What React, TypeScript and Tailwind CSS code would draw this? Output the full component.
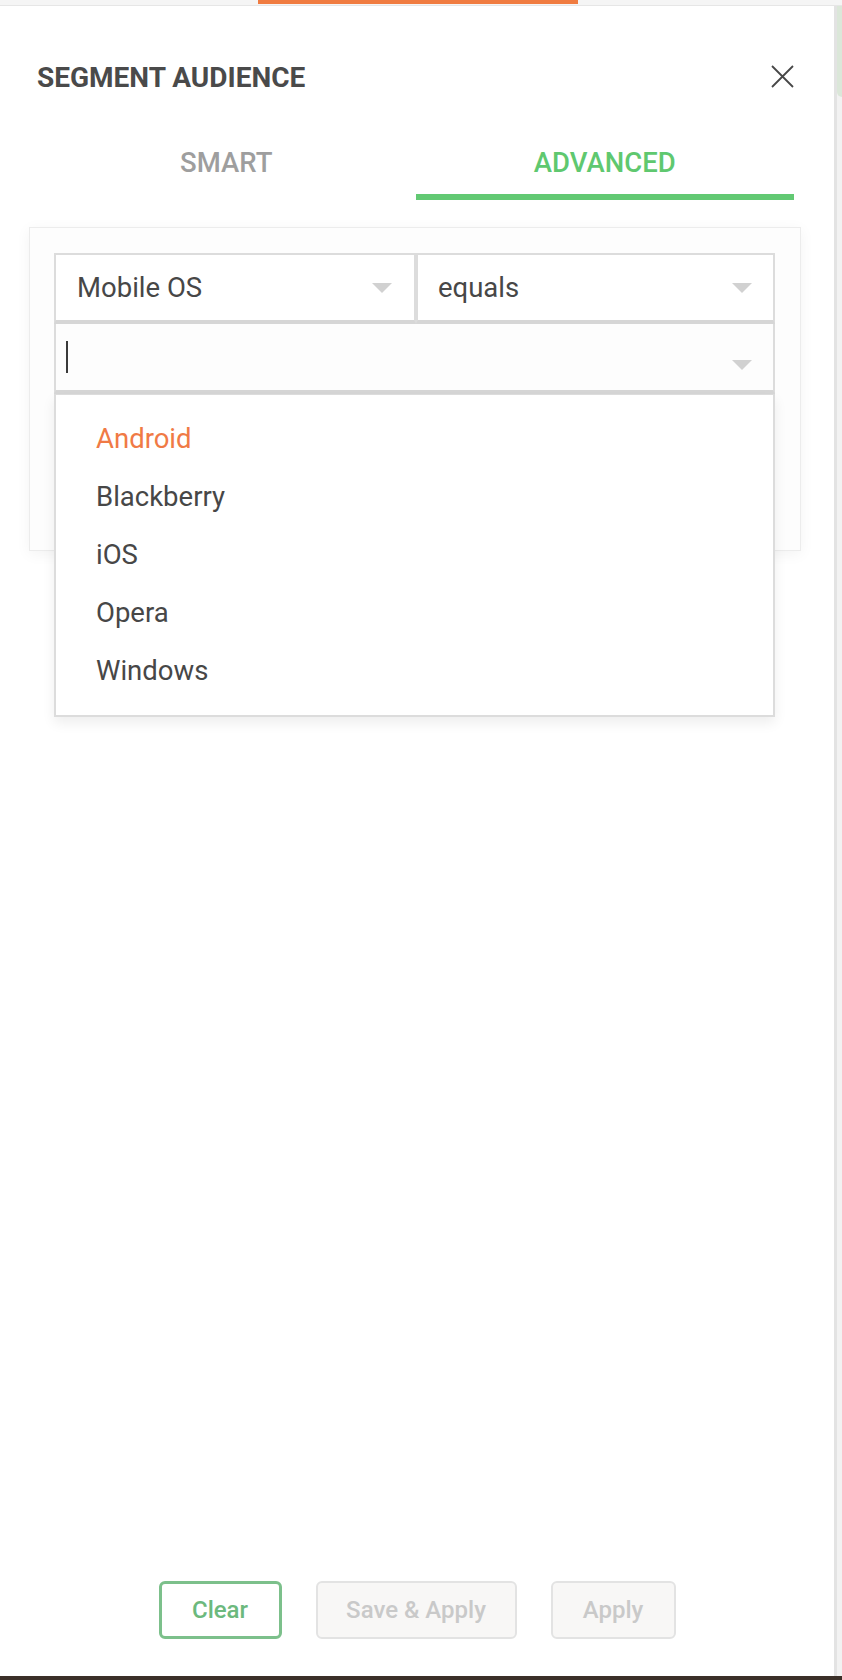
import React, { useState } from 'react';

const osOptions = ['Android', 'Blackberry', 'iOS', 'Opera', 'Windows'];

const Caret: React.FC<{ className?: string }> = ({ className }) => (
  <svg className={className} width="20" height="10" viewBox="0 0 20 10" fill="#d1d1d1">
    <path d="M0 0h20L10 10z" />
  </svg>
);

const App: React.FC = () => {
  const [tab, setTab] = useState<'smart' | 'advanced'>('advanced');
  const [active] = useState('Android');

  return (
    <div className="h-[1680px] w-[842px] flex flex-col bg-[#f4f4f4] font-['Roboto',sans-serif]">
      {/* barre du haut */}
      <div className="h-[6px] flex-none bg-[#f5f5f5] border-b border-[#e6e6e6]">
        <div className="ml-[258px] w-[320px] h-[4px] bg-[#f07c41]"></div>
      </div>

      <div className="flex flex-1 min-h-0">
        {/* panneau principal */}
        <div className="w-[834px] flex flex-col bg-white">
          {/* en-tête */}
          <div className="flex items-start justify-between pt-[58px] pl-[37px] pr-[40px]">
            <h2 className="text-[28px] leading-[28px] font-bold text-[#4a4a4a]">SEGMENT AUDIENCE</h2>
            <button className="w-[23px] h-[23px] mt-[1px]" aria-label="close">
              <svg width="23" height="23" viewBox="0 0 23 23" stroke="#474747" strokeWidth="1.8" fill="none">
                <path d="M1 1l21 21M22 1L1 22" />
              </svg>
            </button>
          </div>

          {/* onglets */}
          <div className="flex mt-[57px] pl-[37px] pr-[40px]">
            <button
              onClick={() => setTab('smart')}
              className={`flex-1 pb-[18px] border-b-[6px] text-[27.5px] leading-[27px] font-medium ${
                tab === 'smart' ? 'text-[#5fc86f] border-[#62c973]' : 'text-[#9e9e9e] border-transparent'
              }`}
            >
              SMART
            </button>
            <button
              onClick={() => setTab('advanced')}
              className={`flex-1 pb-[18px] border-b-[6px] text-[27.5px] leading-[27px] font-medium ${
                tab === 'advanced' ? 'text-[#5fc86f] border-[#62c973]' : 'text-[#9e9e9e] border-transparent'
              }`}
            >
              ADVANCED
            </button>
          </div>

          {/* carte des conditions */}
          <div className="mt-[27px] ml-[29px] w-[772px] h-[324px] border border-[#ececec] bg-[#fdfdfd] shadow-[0_3px_14px_rgba(0,0,0,0.05)] pt-[25px] pl-[24px] pr-[25px]">
            <div className="relative">
              <div className="flex">
                <div className="w-[362px] h-[71px] flex items-center justify-between pl-[21px] pr-[22px] bg-white border-2 border-b-4 border-[#dcdcdc] border-b-[#d6d6d6]">
                  <span className="text-[27.5px] leading-[27px] text-[#474747]">Mobile OS</span>
                  <Caret />
                </div>
                <div className="flex-1 h-[71px] flex items-center justify-between pl-[20px] pr-[21px] bg-white border-2 border-b-4 border-[#dcdcdc] border-b-[#d6d6d6]">
                  <span className="text-[27.5px] leading-[27px] text-[#474747]">equals</span>
                  <Caret />
                </div>
              </div>
              <div className="h-[70px] flex items-center justify-between pl-[10px] pr-[21px] bg-[#fdfdfd] border-x-2 border-b-4 border-[#dcdcdc] border-b-[#d6d6d6]">
                <span className="w-[2px] h-[32px] bg-[#3a3a3a]"></span>
                <Caret className="mt-4" />
              </div>

              {/* liste déroulante */}
              <ul className="absolute left-0 right-0 top-full h-[323px] bg-white border-2 border-t border-[#dcdcdc] shadow-[0_6px_12px_rgba(0,0,0,0.07)] py-[15px] pl-[40px] z-10">
                {osOptions.map((os) => (
                  <li
                    key={os}
                    className={`text-[27.5px] leading-[58px] ${os === active ? 'text-[#f07a45]' : 'text-[#474747]'}`}
                  >
                    {os}
                  </li>
                ))}
              </ul>
            </div>
          </div>

          {/* boutons */}
          <div className="mt-auto pb-[37px] flex justify-center gap-[34px]">
            <button className="w-[123px] h-[58px] rounded-[6px] border-[3px] border-[#7cc08b] bg-white text-[24px] font-medium text-[#6cb97d]">
              Clear
            </button>
            <button className="w-[201px] h-[58px] rounded-[6px] border-2 border-[#e3e3e3] bg-[#f8f7f6] text-[24px] font-medium text-[#c9c9c9]">
              Save &amp; Apply
            </button>
            <button className="w-[125px] h-[58px] rounded-[6px] border-2 border-[#e3e3e3] bg-[#f8f7f6] text-[24px] font-medium text-[#c9c9c9]">
              Apply
            </button>
          </div>
        </div>

        {/* bord droit (contenu derrière) */}
        <div className="w-[8px] border-l-[3px] border-[#e3e3e3] bg-[#f2f2f2]">
          <div className="h-[91px] bg-[#dbe7d9] rounded-bl-[6px]"></div>
        </div>
      </div>

      <div className="h-[4px] flex-none bg-[#3b3029]"></div>
    </div>
  );
};

export default App;
